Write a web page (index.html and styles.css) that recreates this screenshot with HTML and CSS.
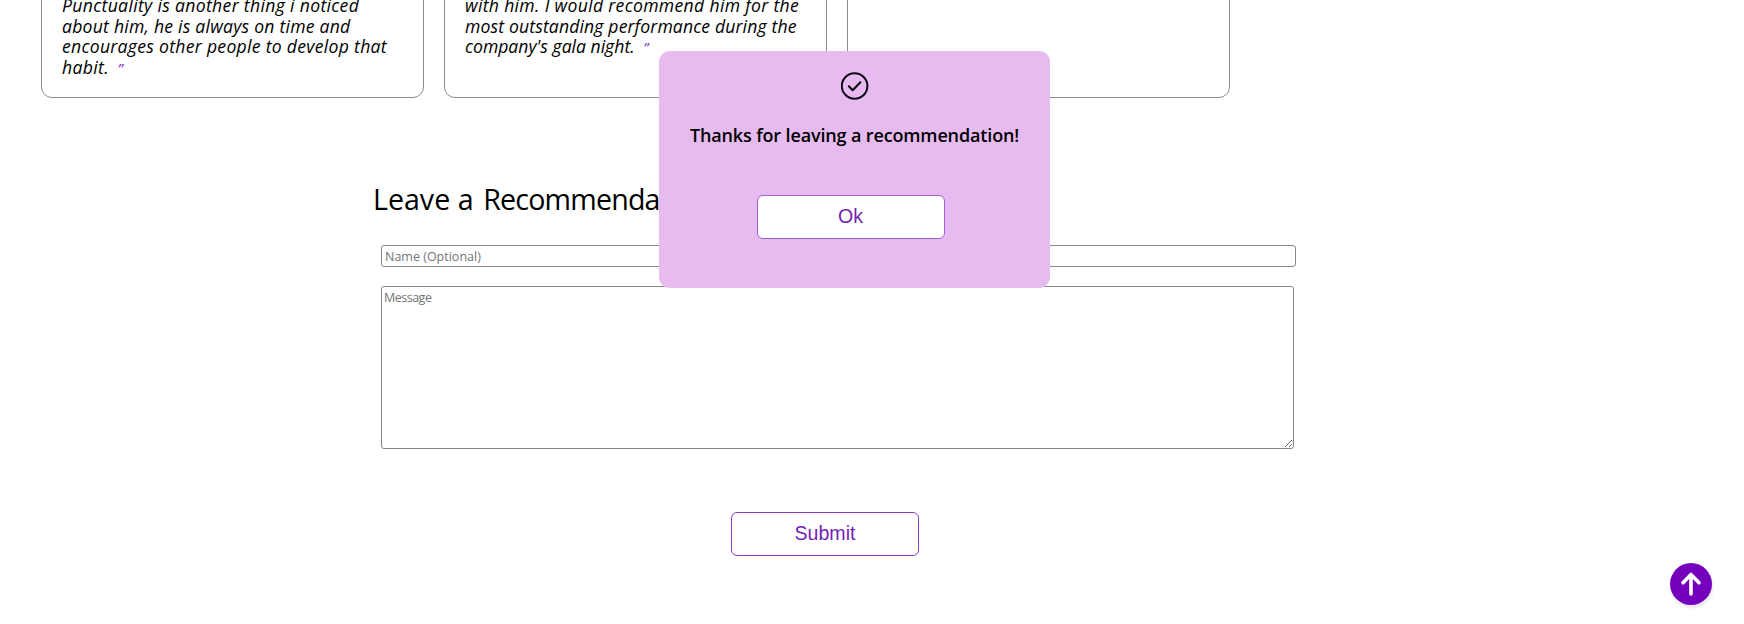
FILE: index.html
```html
<!DOCTYPE html>
<html lang="en">
<head>
<meta charset="utf-8">
<title>Recommendations</title>
<link rel="stylesheet" href="styles.css">
</head>
<body>
<section class="cards">
  <article class="card"><p class="quote"><span class="l1">Punctuality is another thing i noticed</span><br><span class="l2">about him, he is always on time and</span><br><span class="l3">encourages other people to develop that</span><br><span class="l4">habit.</span> <span class="mark">”</span></p></article>
  <article class="card"><p class="quote"><span class="l5">with him. I would recommend him for the</span><br><span class="l6">most outstanding performance during the</span><br><span class="l7">company's gala night.</span> <span class="mark">”</span><br>&nbsp;</p></article>
  <article class="card"></article>
</section>
<form class="form">
  <h2 class="heading"><span class="lead">Leave a</span> Recommendation</h2>
  <input class="name" type="text" placeholder="Name (Optional)">
  <textarea class="message" placeholder="Message"></textarea>
  <button class="btn submit" type="button">Submit</button>
</form>
<div class="popup" role="dialog">
  <svg class="check" viewBox="0 0 28 28" fill="none" stroke="#0d0612" stroke-linecap="round" stroke-linejoin="round">
    <circle cx="13.6" cy="14" r="12.8" stroke-width="2"/>
    <path d="M7.8 14.2L11.7 18.2L19.4 10.2" stroke-width="2"/>
  </svg>
  <h3 class="thanks">Thanks for leaving a recommendation!</h3>
  <button class="btn ok" type="button">Ok</button>
</div>
<a class="top" href="#">
  <svg width="42" height="42" viewBox="0 0 42 42" fill="none" stroke="#fff" stroke-width="3.6" stroke-linecap="round" stroke-linejoin="round"><path d="M21 31V12M13 19.8L21 11.5L29 19.8"/></svg>
</a>
</body>
</html>
```
FILE: styles.css
```css
* { box-sizing: border-box; }
html { overflow: hidden; }
body { margin: 0; height: 624px; overflow: hidden; background: #fff; color: #000; font-family: "Trebuchet MS", "Open Sans", sans-serif; }
.cards { display: flex; gap: 20px; padding-left: 41px; height: 98px; align-items: flex-end; overflow: hidden; }
.card { width: 383px; height: 180px; flex: none; display: flex; align-items: flex-end; padding: 0 20px 19px; border: 1px solid #8c8c8c; border-radius: 11px; }
.quote { margin: 0; font-size: 17.6px; line-height: 20.8px; font-style: italic; font-weight: 500; white-space: nowrap; }
.l1 { letter-spacing: .33px; }
.l2 { letter-spacing: .23px; }
.l3 { letter-spacing: .29px; }
.l4 { letter-spacing: .35px; }
.l5 { letter-spacing: .32px; }
.l6 { letter-spacing: .14px; }
.mark { color: #7a2bbd; font-size: 15px; line-height: 1; margin-left: 4px; }
.form { width: 950px; margin-left: 373px; display: flex; flex-direction: column; align-items: flex-start; }
.heading { margin: 82px 0 0; font-size: 28.6px; line-height: 38px; font-weight: 400; letter-spacing: -.8px; white-space: nowrap; }
.lead { letter-spacing: 0; margin-right: 3px; }
.name, .message { margin-left: 8px; border: 1px solid #858585; border-radius: 3px; font: 12.5px "Trebuchet MS", "Open Sans", sans-serif; background: #fff; outline: 0; }
.name { width: 915px; height: 22px; margin-top: 27px; padding: 0 3px; }
.message { width: 913px; height: 163px; margin-top: 19px; padding: 2px; letter-spacing: -.5px; resize: both; }
.name::placeholder, .message::placeholder { color: #757575; }
.btn { width: 188px; height: 44px; padding: 0 0 2px; border: 1px solid #8b3fc0; border-radius: 6px; background: #fff; color: #741fb5; font: 19.6px "Liberation Sans", Arial, sans-serif; }
.submit { margin: 63px 0 0 358px; }
.popup { position: absolute; left: 659px; top: 51px; width: 391px; height: 236.5px; border-radius: 11px; background: #e7bbef; display: flex; flex-direction: column; align-items: center; padding-top: 21px; }
.check { width: 28px; height: 28px; }
.thanks { margin: 21px 0 0; font-size: 18px; line-height: 28px; font-weight: 600; letter-spacing: -.14px; white-space: nowrap; }
.ok { margin: 46px 8px 0 0; border-color: #a35fd0; }
.top { position: absolute; left: 1670px; top: 563px; width: 42px; height: 42px; border-radius: 50%; background: #7400bd; box-shadow: 1px 3px 3px rgba(90, 60, 110, .12); }
.top svg { display: block; }
```
